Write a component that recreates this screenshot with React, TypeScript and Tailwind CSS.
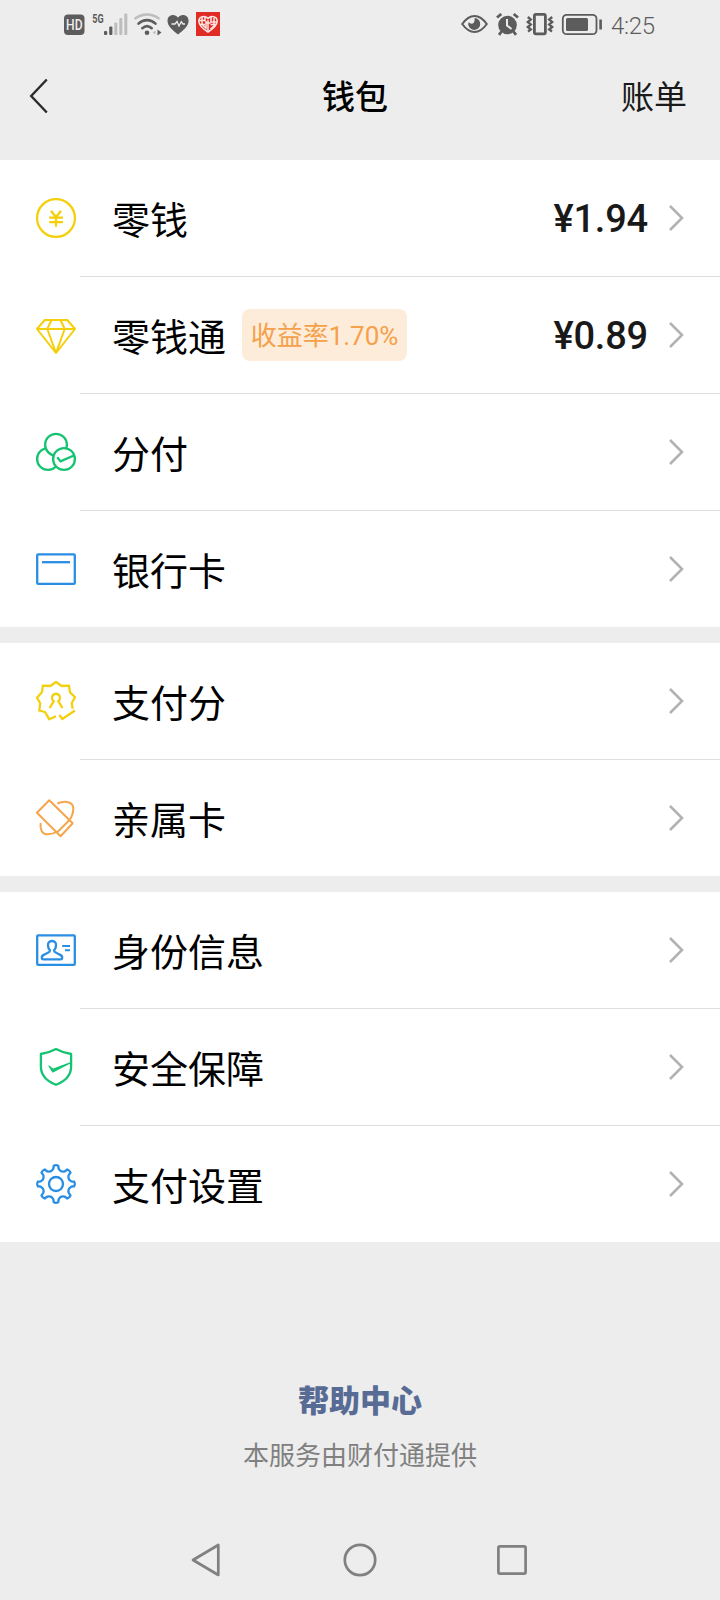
import type { ReactNode } from "react";

interface WalletItem {
  label: string;
  icon: ReactNode;
  amount?: string;
  badge?: string;
}

function LineIcon({ color, children }: { color: string; children: ReactNode }) {
  return (
    <svg
      viewBox="0 0 44 44"
      className="h-11 w-11 shrink-0"
      fill="none"
      stroke={color}
      strokeWidth={2.3}
      strokeLinejoin="round"
    >
      {children}
    </svg>
  );
}

const YELLOW = "#f4cf0c";
const GREEN = "#14c472";
const BLUE = "#2a8ee3";
const ORANGE = "#f5a64c";

// eight-tooth gear outline around (22, 22)
function gearPath() {
  const at = (r: number, deg: number) => {
    const a = ((deg - 90) * Math.PI) / 180;
    return `${(22 + r * Math.cos(a)).toFixed(2)} ${(22 + r * Math.sin(a)).toFixed(2)}`;
  };
  let d = "";
  for (let i = 0; i < 8; i++) {
    const t = i * 45;
    d += `${i === 0 ? "M" : "L"}${at(15.5, t - 10)} L${at(18.4, t - 7)} Q${at(19.4, t)} ${at(18.4, t + 7)} L${at(15.5, t + 10)} Q${at(12.4, t + 22.5)} ${at(15.5, t + 35)} `;
  }
  return d + "Z";
}

const sections: WalletItem[][] = [
  [
    {
      label: "零钱",
      amount: "¥1.94",
      icon: (
        <LineIcon color={YELLOW}>
          <circle cx="22" cy="22" r="18.9" />
          <path d="M17 14.8 22 21.3 27 14.8M22 21.3V30.8M15.2 21.6H29M15.2 26.2H29" />
        </LineIcon>
      ),
    },
    {
      label: "零钱通",
      badge: "收益率1.70%",
      amount: "¥0.89",
      icon: (
        <LineIcon color={YELLOW}>
          <path d="M10.7 7H33.3L41 16 22 40 3 16ZM3 16H41M17.5 7 13.3 16 22 40 30.7 16 26.5 7" strokeWidth={2} />
        </LineIcon>
      ),
    },
    {
      label: "分付",
      icon: (
        <LineIcon color={GREEN}>
          <circle cx="14" cy="29" r="10.9" />
          <circle cx="22" cy="14.7" r="10.9" fill="#fff" />
          <circle cx="30" cy="29" r="10.9" fill="#fff" />
          <path d="M23.3 27.3 26.4 31.4 40.5 25.3" />
        </LineIcon>
      ),
    },
    {
      label: "银行卡",
      icon: (
        <LineIcon color={BLUE}>
          <rect x="3.2" y="7.3" width="37.6" height="29.6" rx="1" />
          <path d="M8 15.2H36" />
        </LineIcon>
      ),
    },
  ],
  [
    {
      label: "支付分",
      icon: (
        <LineIcon color={YELLOW}>
          <path d="M38.7 29.7 37.7 24.3 41 18.3 36 13.3 35 6.7 27.7 7 22 3 16.3 7 8.9 6.7 7.9 13.3 3 18.7 6.2 24.3 5.3 31.7 11 33 15.3 40.3 22 37.2M25.3 35.8 28.3 40 41 31.5" />
          <path d="M15.6 29 19.8 22.1A4 4 0 1 1 24.2 22.1L28.6 29" />
        </LineIcon>
      ),
    },
    {
      label: "亲属卡",
      icon: (
        <LineIcon color={ORANGE}>
          <path d="M15.3 4.2 38.7 27.3 26.6 40.3 2.9 16.7ZM35.3 24.2 23 36.5" strokeWidth={2} />
          <path d="M23.3 7.5C31 4.5 39.3 5.5 39.3 12.5C39.3 16.5 38 20.5 35.5 24M6.7 27C5.6 33 8 38.3 13.8 38.3C17.5 38.3 20.5 37.3 23 35.5" strokeWidth={2} />
        </LineIcon>
      ),
    },
  ],
  [
    {
      label: "身份信息",
      icon: (
        <LineIcon color={BLUE}>
          <rect x="3.2" y="7.3" width="37.6" height="29.6" rx="1" />
          <path d="M18 13C15.2 13 13.8 15 14 17.6C14.1 19.6 14.7 20.8 15.8 22C16.4 23.6 15.5 24.2 12.5 25.5C9 27 7.8 27.4 7.8 29.5C7.8 30.8 8.5 31.3 9.5 31.3H26.5C27.5 31.3 28.2 30.8 28.2 29.5C28.2 27.4 27 27 23.5 25.5C20.5 24.2 19.6 23.6 20.2 22C21.3 20.8 21.9 19.6 22 17.6C22.2 15 20.8 13 18 13Z" />
          <path d="M28.2 18H36M31 22.2H36" strokeWidth={2} />
        </LineIcon>
      ),
    },
    {
      label: "安全保障",
      icon: (
        <LineIcon color={GREEN}>
          <path d="M22 4C26 6.2 31.5 8.2 37.1 9V21.5C37.1 30.5 30.5 36.5 22 39.8C13.5 36.5 6.9 30.5 6.9 21.5V9C12.5 8.2 18 6.2 22 4Z" />
          <path d="M15 21 18.8 24.2 37 17.5 18.8 27Z" fill={GREEN} strokeWidth={1.2} />
        </LineIcon>
      ),
    },
    {
      label: "支付设置",
      icon: (
        <LineIcon color={BLUE}>
          <path d={gearPath()} />
          <circle cx="22" cy="22" r="7" />
        </LineIcon>
      ),
    },
  ],
];

function StatusBar() {
  return (
    <div className="flex h-12 items-center px-16 text-[#5c5c5c]">
      <svg viewBox="64 0 156 48" className="h-12 w-[156px]" fill="#5c5c5c">
        <rect x="64" y="14.5" width="20.5" height="20.5" rx="4" />
        <text x="74.3" y="30" textAnchor="middle" fill="#ededed" fontFamily="Roboto" fontWeight="500" fontSize="14.5" textLength="16.5" lengthAdjust="spacingAndGlyphs">HD</text>
        <text x="92.3" y="23" fontFamily="Roboto" fontWeight="700" fontSize="13.5" textLength="11.3" lengthAdjust="spacingAndGlyphs">5G</text>
        <rect x="104" y="31" width="3.2" height="4" rx="1" />
        <rect x="109.2" y="26.5" width="3.2" height="8.5" rx="1" />
        <g fill="#bdbdbd">
          <rect x="114.3" y="22.5" width="3" height="12.5" rx="1" />
          <rect x="119.3" y="18" width="3" height="17" rx="1" />
          <rect x="124.3" y="13.5" width="3" height="21.5" rx="1" />
        </g>
        <g fill="none" strokeWidth="2.6" strokeLinecap="round">
          <path d="M135.5 18.3C142.5 13.2 151.5 13.2 158.5 18.3" stroke="#bdbdbd" />
          <path d="M138.5 23.6C143.5 19 150.5 19 155.5 23.6M142.3 28.2C145.3 25.5 148.7 25.5 151.7 28.2" stroke="#5c5c5c" />
        </g>
        <circle cx="147" cy="32.8" r="2.3" />
        <path d="M157.5 29.5 161.5 32.5 157.5 35.5Z" />
        <path d="M155.5 30.5 152.5 32.5 155.5 34.5Z" fill="#bdbdbd" />
        <path d="M178 34.5C173 30.5 167.5 26.5 167.5 20.8C167.5 14.5 175 13 178 17.7C181 13 188.6 14.5 188.6 20.8C188.6 26.5 183 30.5 178 34.5Z" />
        <path d="M171.5 24H175L177 21.5 179 26 181.3 21.8 183 24H185" fill="none" stroke="#ededed" strokeWidth="1.3" />
        <rect x="196" y="12" width="24" height="24" fill="#e12b25" />
        <g fill="none" stroke="#fbe6e3" strokeWidth="1.5">
          <path d="M208 32C202.5 28.5 198.8 25 198.8 21C198.8 16 205 15.4 208 18.4C211 15.4 217.2 16 217.2 21C217.2 25 213.5 28.5 208 32Z" />
          <path d="M199 20.5H205V17M202 17V24.5L206 28V21M200 24.5H205M208 20V31M211 17V22H217M214 18V26L210.5 29M210.5 24.5H216M206 23H210.5" />
        </g>
      </svg>
      <svg viewBox="461 0 142 48" className="ml-auto h-12 w-[142px]" fill="none" stroke="#5c5c5c" strokeWidth="2">
        <path d="M462.2 24C466.5 18 470.5 16 474.5 16C478.5 16 482.5 18 486.8 24C482.5 30 478.5 32 474.5 32C470.5 32 466.5 30 462.2 24Z" />
        <path d="M474.5 18A6 6 0 1 1 468.5 22.3Q471.5 25 473.8 22.8Q475.3 20.5 474.5 18Z" fill="#5c5c5c" stroke="none" />
        <circle cx="507.5" cy="25" r="9.3" fill="#5c5c5c" stroke="none" />
        <path d="M497 17.5 501.3 14M518 17.5 513.7 14M501.5 31.5 499 34.8M513.5 31.5 516 34.8" strokeWidth="2.8" />
        <path d="M507 19V25.5L511.5 29" stroke="#ededed" />
        <rect x="534.4" y="14.4" width="11" height="19.4" rx="1.5" strokeWidth="2.8" />
        <path d="M527.8 17 530.8 19.5 527.8 22 530.8 24.5 527.8 27 530.8 29.5 528 31.5M552.2 17 549.2 19.5 552.2 22 549.2 24.5 552.2 27 549.2 29.5 552 31.5" strokeWidth="2.3" />
        <rect x="562.8" y="14.8" width="33.7" height="19.4" rx="4" strokeWidth="1.8" />
        <rect x="566" y="18" width="22" height="13" rx="1.5" fill="#5c5c5c" stroke="none" />
        <path d="M600.6 19.5V29.5" strokeWidth="2.6" />
      </svg>
      <span className="ml-2 w-[45px] pt-[3px] font-[Roboto] text-[24px] leading-none font-light tracking-[-0.3px] whitespace-nowrap">
        4:25
      </span>
    </div>
  );
}

function Header() {
  return (
    <header className="flex h-28 items-start pt-[30px] pr-[33px] pl-[29px]">
      <svg viewBox="0 0 20 36" className="h-9 w-5" fill="none" stroke="#2b2b2b" strokeWidth="2.4">
        <path d="M17.8 1.5 2.2 18 17.8 34.5" />
      </svg>
      <h1 className="ml-[273px] -mt-px text-[33px] leading-9 font-medium text-black">钱包</h1>
      <span className="-mt-px ml-auto text-[33px] leading-9 text-[#1a1a1a]">账单</span>
    </header>
  );
}

function WalletRow({ item }: { item: WalletItem }) {
  return (
    <div className="flex h-[116px] items-center pr-9 pl-[34px]">
      {item.icon}
      <span className="ml-[34px] text-[38px] leading-none text-black">{item.label}</span>
      {item.badge && (
        <span className="ml-4 flex h-[52px] w-[165px] items-center justify-center rounded-lg bg-[#fdecd9] pt-0.5 font-[Roboto,'Noto_Sans_CJK_SC',sans-serif] text-[26px] leading-none whitespace-nowrap text-[#f5a04a]">
          {item.badge}
        </span>
      )}
      {item.amount && (
        <span className="ml-auto pt-px font-[Roboto] text-[38px] leading-none font-medium tracking-[-0.2px] text-[#191919]">
          {item.amount}
        </span>
      )}
      <svg
        viewBox="0 0 16 28"
        className={item.amount ? "ml-5 h-7 w-4" : "ml-auto h-7 w-4"}
        fill="none"
        stroke="#b2b2b2"
        strokeWidth="2.6"
      >
        <path d="M2 2 14 14 2 26" />
      </svg>
    </div>
  );
}

function NavBar() {
  return (
    <nav className="mt-auto flex h-20 items-center justify-between pr-[190px] pl-[188px]">
      <svg viewBox="0 0 36 36" className="h-9 w-9" fill="none" stroke="#808080" strokeWidth="2.7" strokeLinejoin="round">
        <path d="M30.3 3V33L5 18Z" />
      </svg>
      <svg viewBox="0 0 36 36" className="h-9 w-9" fill="none" stroke="#808080" strokeWidth="2.7">
        <circle cx="19" cy="18" r="15.2" />
      </svg>
      <svg viewBox="0 0 36 36" className="h-9 w-9" fill="none" stroke="#808080" strokeWidth="2.7">
        <rect x="4.4" y="4.4" width="27.2" height="27.2" rx="1.5" />
      </svg>
    </nav>
  );
}

export default function App() {
  return (
    <div className="flex h-[1600px] w-[720px] flex-col overflow-hidden bg-[#ededed] font-['Noto_Sans_CJK_SC',sans-serif]">
      <StatusBar />
      <Header />
      <main className="flex flex-col gap-4">
        {sections.map((items) => (
          <section key={items[0].label} className="bg-white">
            {items.map((item, i) => (
              <div key={item.label}>
                {i > 0 && <div className="ml-20 h-px bg-[#dedede]" />}
                <WalletRow item={item} />
              </div>
            ))}
          </section>
        ))}
      </main>
      <footer className="mt-[141px] flex flex-col items-center">
        <span className="text-[31px] leading-8 font-black text-[#576b95]">帮助中心</span>
        <span className="mt-[25px] text-[26px] leading-7 text-[#808080]">本服务由财付通提供</span>
      </footer>
      <NavBar />
    </div>
  );
}
